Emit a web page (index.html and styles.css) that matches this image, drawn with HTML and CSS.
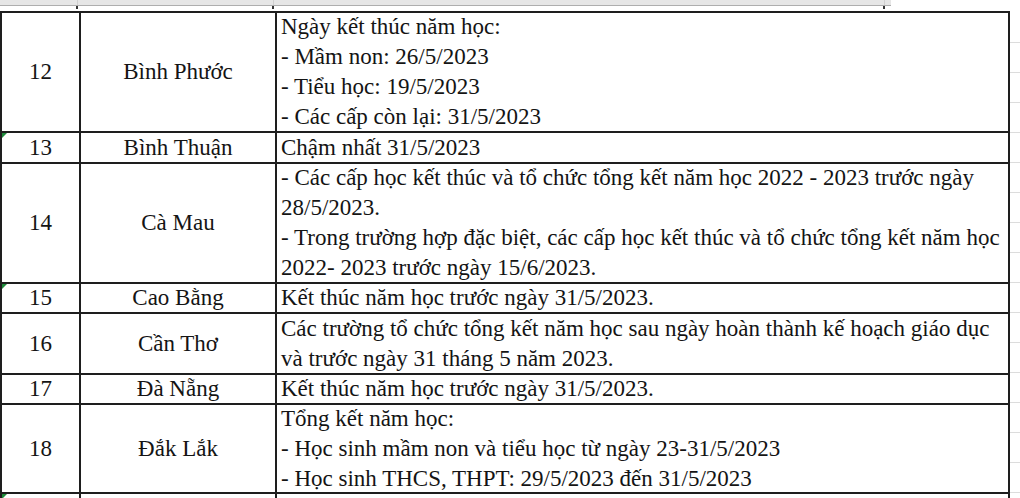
FILE: index.html
```html
<!DOCTYPE html>
<html lang="vi">
<head>
<meta charset="utf-8">
<title>Thời gian kết thúc năm học</title>
<link rel="stylesheet" href="styles.css">
</head>
<body>
<div class="sheet">
  <div class="topbar">
    <div class="tb-cell tb-c1"></div>
    <div class="tb-cell tb-c2"></div>
    <div class="tb-cell tb-c3"></div>
  </div>
  <div class="ticks">
    <div class="tk tk-c1"></div>
    <div class="tk tk-c2"></div>
    <div class="tk tk-c3"></div>
  </div>
  <table class="grid">
    <colgroup>
      <col class="c-stt">
      <col class="c-name">
      <col class="c-note">
    </colgroup>
    <tr>
      <td class="num"><div class="box h120">12</div></td>
      <td class="prov"><div class="box h120">Bình Phước</div></td>
      <td class="note"><div class="box h120">
        <div class="ln">Ngày kết thúc năm học:</div>
        <div class="ln">- Mầm non: 26/5/2023</div>
        <div class="ln">- Tiểu học: 19/5/2023</div>
        <div class="ln">- Các cấp còn lại: 31/5/2023</div>
      </div></td>
    </tr>
    <tr>
      <td class="num flag"><div class="box h31">13</div></td>
      <td class="prov"><div class="box h31">Bình Thuận</div></td>
      <td class="note"><div class="box h31"><div class="ln">Chậm nhất 31/5/2023</div></div></td>
    </tr>
    <tr>
      <td class="num"><div class="box h120">14</div></td>
      <td class="prov"><div class="box h120">Cà Mau</div></td>
      <td class="note"><div class="box h120">
        <div class="ln">- Các cấp học kết thúc và tổ chức tổng kết năm học 2022 - 2023 trước ngày</div>
        <div class="ln">28/5/2023.</div>
        <div class="ln">- Trong trường hợp đặc biệt, các cấp học kết thúc và tổ chức tổng kết năm học</div>
        <div class="ln">2022- 2023 trước ngày 15/6/2023.</div>
      </div></td>
    </tr>
    <tr>
      <td class="num flag"><div class="box h30">15</div></td>
      <td class="prov"><div class="box h30">Cao Bằng</div></td>
      <td class="note"><div class="box h30"><div class="ln">Kết thúc năm học trước ngày 31/5/2023.</div></div></td>
    </tr>
    <tr>
      <td class="num"><div class="box h61">16</div></td>
      <td class="prov"><div class="box h61">Cần Thơ</div></td>
      <td class="note"><div class="box h61">
        <div class="ln">Các trường tổ chức tổng kết năm học sau ngày hoàn thành kế hoạch giáo dục</div>
        <div class="ln">và trước ngày 31 tháng 5 năm 2023.</div>
      </div></td>
    </tr>
    <tr>
      <td class="num"><div class="box h30">17</div></td>
      <td class="prov"><div class="box h30">Đà Nẵng</div></td>
      <td class="note"><div class="box h30"><div class="ln">Kết thúc năm học trước ngày 31/5/2023.</div></div></td>
    </tr>
    <tr>
      <td class="num"><div class="box h89">18</div></td>
      <td class="prov"><div class="box h89">Đắk Lắk</div></td>
      <td class="note"><div class="box h89">
        <div class="ln">Tổng kết năm học:</div>
        <div class="ln">- Học sinh mầm non và tiểu học từ ngày 23-31/5/2023</div>
        <div class="ln">- Học sinh THCS, THPT: 29/5/2023 đến 31/5/2023</div>
      </div></td>
    </tr>
    <tr>
      <td class="num flag"><div class="box h30 start">19</div></td>
      <td class="prov"><div class="box h30 start">Đắk Nông</div></td>
      <td class="note"><div class="box h30 start"><div class="ln">Kết thúc năm học trước ngày 31/5/2023.</div></div></td>
    </tr>
  </table>
</div>
</body>
</html>
```

FILE: styles.css
```css
html, body {
  margin: 0;
  padding: 0;
  background: #ffffff;
}

.sheet {
  width: 1020px;
  height: 498px;
  overflow: hidden;
  background-color: #ffffff;
  background-image: repeating-linear-gradient(to bottom, transparent 0, transparent 29px, #dcdcdc 29px, #dcdcdc 30px);
  background-position: 0 13px;
  font-family: "Liberation Serif", "Tinos", "Times New Roman", "Times", "Nimbus Roman", "Noto Serif", "DejaVu Serif", serif;
  color: #141414;
}

.topbar {
  display: flex;
  width: 891px;
  height: 5px;
  background: #e6e6e6;
  border-bottom: 1px solid #aeaeae;
}

.tb-cell {
  height: 5px;
  border-right: 1px solid #d0d0d0;
}
.tb-c1 { width: 77px; }
.tb-c2 { width: 195px; }
.tb-c3 { width: 610px; }

.ticks {
  display: flex;
  height: 3px;
  width: 891px;
  background: #ffffff;
}
.tk {
  height: 3px;
  border-right: 2px solid #333333;
}
.tk-c1 { width: 76px; }
.tk-c2 { width: 194px; }
.tk-c3 { width: 609px; }

.grid {
  margin-top: 2px;
  border-collapse: collapse;
  table-layout: fixed;
  width: 1008px;
  background: #ffffff;
  font-family: "Liberation Serif", "Tinos", "Times New Roman", "Times", "Nimbus Roman", "Noto Serif", "DejaVu Serif", serif;
  font-size: 23px;
  line-height: 30px;
}

.c-stt { width: 79px; }
.c-name { width: 196px; }
.c-note { width: 733px; }

.grid td {
  border: 2px solid #1e1e1e;
  padding: 0;
  white-space: nowrap;
}

.box {
  display: flex;
  flex-direction: column;
  justify-content: center;
  overflow: hidden;
}

.box.start {
  justify-content: flex-start;
}

.num .box,
.prov .box {
  align-items: center;
  text-align: center;
}

.note .box {
  padding-left: 4px;
}

.ln {
  height: 30px;
  flex: 0 0 30px;
}

.h120 { height: 118px; }
.h31 { height: 29px; }
.h30 { height: 28px; }
.h61 { height: 59px; }
.h89 { height: 87px; }

.grid td.flag {
  position: relative;
}
.grid td.flag::before {
  content: "";
  position: absolute;
  left: 0;
  top: 0;
  width: 0;
  height: 0;
  border-top: 5px solid #1f8a3a;
  border-right: 5px solid transparent;
}
```
